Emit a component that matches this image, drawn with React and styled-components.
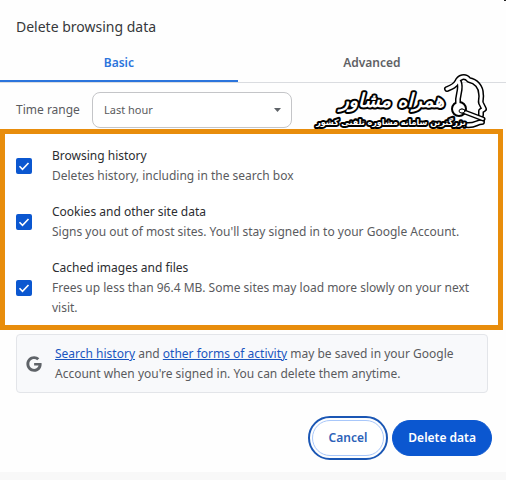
import styled, { createGlobalStyle } from "styled-components";
import { useState } from "react";
import { FaGoogle } from "react-icons/fa";

const GlobalStyle = createGlobalStyle`
  * {
    box-sizing: border-box;
  }
  body {
    margin: 0;
    background: #f8f8f8;
    font-family: "Noto Sans", "Open Sans", sans-serif;
    font-size: 12px;
    line-height: 20px;
    color: #5a5b5e;
  }
`;

const Dialog = styled.main`
  position: relative;
  background: #fefefe;
  padding-bottom: 12px;
`;

const CornerMark = styled.span`
  position: absolute;
  top: 0;
  right: 0;
  width: 2px;
  height: 1px;
  background: #222;
`;

const Title = styled.h1`
  margin: 0;
  padding: 16px 16px 0;
  font-size: 14px;
  font-weight: 400;
  line-height: 22px;
  color: #37383b;
`;

const Tabs = styled.div`
  display: grid;
  grid-template-columns: 47% 53%;
  margin-top: 6px;
  border-bottom: 1px solid #dadce0;
`;

const Tab = styled.button`
  height: 38px;
  padding: 2px 0 0;
  border: 0;
  border-bottom: 2px solid ${(p) => (p.$active ? "#2b74dc" : "transparent")};
  background: none;
  font: inherit;
  font-weight: 600;
  color: ${(p) => (p.$active ? "#2b74dc" : "#606165")};
`;

const RangeRow = styled.div`
  display: flex;
  align-items: center;
  gap: 11px;
  padding: 9px 16px 1px;
`;

const RangeLabel = styled.label`
  flex: none;
  min-width: 65px;
`;

const SelectWrap = styled.div`
  display: grid;
  align-items: center;
  width: 200px;

  > * {
    grid-area: 1 / 1;
  }
`;

const Select = styled.select`
  appearance: none;
  height: 36px;
  padding: 0 11px;
  border: 1px solid #c4c5c8;
  border-radius: 8px;
  background: #fff;
  font: inherit;
  font-size: 11px;
  color: #5a5b5e;
`;

const Arrow = styled.svg`
  justify-self: end;
  margin-right: 11px;
  pointer-events: none;
`;

const Watermark = styled.svg`
  position: absolute;
  top: 74px;
  right: 20px;
  overflow: visible;
  font-family: "DejaVu Sans", sans-serif;
  font-weight: 700;
  pointer-events: none;
`;

const Options = styled.section`
  display: flex;
  flex-direction: column;
  gap: 16px;
  margin-right: 3px;
  padding: 12px 16px 7px 11px;
  border: 5px solid #e88d0c;
  background: #fff;
`;

const Option = styled.label`
  display: flex;
  align-items: center;
  gap: 20px;
`;

const CheckWrap = styled.span`
  display: grid;
  flex: none;

  > * {
    grid-area: 1 / 1;
  }
`;

const Checkbox = styled.input`
  appearance: none;
  width: 16px;
  height: 16px;
  margin: 0;
  border: 2px solid #0b57d0;
  border-radius: 2px;

  &:checked {
    background: #0b57d0;
  }
`;

const OptionName = styled.span`
  display: block;
  color: #2c2d30;
`;

const Notice = styled.aside`
  display: flex;
  align-items: center;
  gap: 13px;
  margin: 4px 18px 0 16px;
  padding: 9px 9px 8px;
  border: 1px solid #e3e5e9;
  border-radius: 4px;
  background: #f8f9fb;

  p {
    margin: 0;
  }
  svg {
    flex: none;
    color: #5f6368;
  }
`;

const Link = styled.a`
  color: #1a56c0;
`;

const Actions = styled.div`
  display: flex;
  justify-content: flex-end;
  gap: 8px;
  padding: 27px 14px 4px;
`;

const Button = styled.button`
  height: 36px;
  padding: 0 ${(p) => (p.$primary ? 15 : 16)}px;
  border: 1px solid ${(p) => (p.$primary ? "#0b57d0" : "#a8c7fa")};
  border-radius: 18px;
  outline: ${(p) => (p.$primary ? "none" : "2px solid #1a56b4")};
  outline-offset: 2px;
  background: ${(p) => (p.$primary ? "#0b57d0" : "#fff")};
  color: ${(p) => (p.$primary ? "#fff" : "#2c62b8")};
  font: inherit;
  font-weight: 600;
`;

const options = [
  {
    id: "history",
    name: "Browsing history",
    text: "Deletes history, including in the search box",
  },
  {
    id: "cookies",
    name: "Cookies and other site data",
    text: "Signs you out of most sites. You'll stay signed in to your Google Account.",
  },
  {
    id: "cache",
    name: "Cached images and files",
    text: "Frees up less than 96.4 MB. Some sites may load more slowly on your next visit.",
  },
];

// head with a headset, black outline first, white line on top
const headPath =
  "M131 15C136 13 139 12 141 8C143 3 149 1 153 6C160 7 165 13 165 20C166 24 164 26 165 29L168 35L165 37L165 41M166 48C160 48 160 52 150 51";
const bandPath = "M143 8C146 15 141 21 142 29";

const Brand = () => (
  <Watermark width="170" height="58" viewBox="0 0 170 58">
    <g fill="none" strokeLinecap="round" strokeLinejoin="round">
      <path d={headPath + bandPath} stroke="#000" strokeWidth="6" />
      <circle cx="143" cy="35" r="7" fill="#fff" stroke="#000" strokeWidth="2" />
      <path d={headPath + bandPath} stroke="#fff" strokeWidth="3" />
      <path d="M146 37L167 45" stroke="#000" strokeWidth="5" />
      <path d="M146 37L167 45" stroke="#fff" strokeWidth="2" />
      <ellipse cx="146" cy="37" rx="3" ry="2" fill="#fff" stroke="#000" />
    </g>
    <g fill="#fff" stroke="#000" strokeLinejoin="round" paintOrder="stroke" textAnchor="middle" direction="rtl">
      <text x="76" y="33" fontSize="19" fontStyle="italic" strokeWidth="4">
        همراه مشاور
      </text>
      <text x="75" y="51" fontSize="8" strokeWidth="4">
        بزرگترین سامانه مشاوره تلفنی کشور
      </text>
    </g>
  </Watermark>
);

const App = () => {
  const [tab, setTab] = useState("Basic");
  const [checked, setChecked] = useState({ history: true, cookies: true, cache: true });

  const toggle = (id) => {
    setChecked({ ...checked, [id]: !checked[id] });
  };

  return (
    <>
      <GlobalStyle />
      <Dialog>
        <CornerMark />
        <Title>Delete browsing data</Title>
        <Tabs role="tablist">
          {["Basic", "Advanced"].map((name) => (
            <Tab
              key={name}
              role="tab"
              aria-selected={tab === name}
              $active={tab === name}
              onClick={() => setTab(name)}
            >
              {name}
            </Tab>
          ))}
        </Tabs>
        <RangeRow>
          <RangeLabel htmlFor="range">Time range</RangeLabel>
          <SelectWrap>
            <Select id="range">
              <option>Last hour</option>
            </Select>
            <Arrow width="7" height="4" viewBox="0 0 7 4">
              <path d="M0 0h7L3.500 4z" fill="#5f6368" />
            </Arrow>
          </SelectWrap>
        </RangeRow>
        <Brand />
        <Options>
          {options.map((o) => (
            <Option key={o.id}>
              <CheckWrap>
                <Checkbox type="checkbox" checked={checked[o.id]} onChange={() => toggle(o.id)} />
                <svg width="16" height="16" viewBox="0 0 16 16" pointerEvents="none">
                  <path d="M3.500 8.300l3 3 6-6.300" fill="none" stroke="#fff" strokeWidth="1.600" />
                </svg>
              </CheckWrap>
              <span>
                <OptionName>{o.name}</OptionName>
                {o.text}
              </span>
            </Option>
          ))}
        </Options>
        <Notice>
          <FaGoogle size={16} />
          <p>
            <Link href="#history">Search history</Link> and <Link href="#activity">other forms of activity</Link> may be
            saved in your Google Account when you're signed in. You can delete them anytime.
          </p>
        </Notice>
        <Actions>
          <Button>Cancel</Button>
          <Button $primary>Delete data</Button>
        </Actions>
      </Dialog>
    </>
  );
};

export default App;
